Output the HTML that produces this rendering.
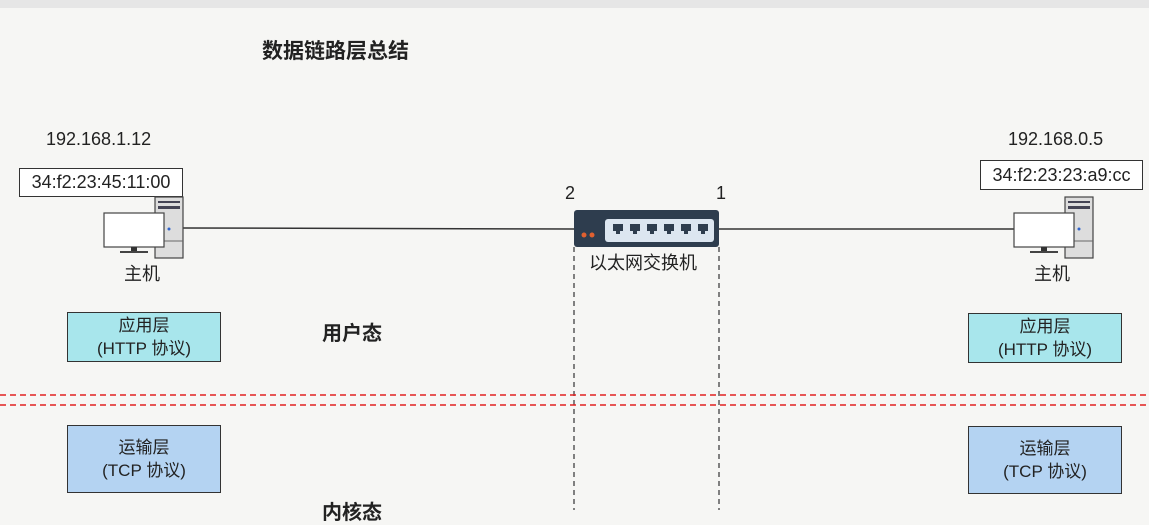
<!DOCTYPE html><html><head><meta charset="utf-8"><style>
body{margin:0;width:1149px;height:510px;overflow:hidden;background:#f6f6f4;font-family:"Liberation Sans","Noto Sans CJK SC",sans-serif;position:relative;color:#222}
.a{position:absolute}
.box{position:absolute;border:1px solid #333;text-align:center;font-size:17px;line-height:23px;box-sizing:border-box}
</style></head><body>
<div class="a" style="left:0;top:0;width:1149px;height:8px;background:#e6e6e6"></div>
<div class="a" style="left:262px;top:35px;font-size:21px;font-weight:bold">数据链路层总结</div>
<div class="a" style="left:46px;top:129px;font-size:18px">192.168.1.12</div>
<div class="a" style="left:1008px;top:129px;font-size:18px">192.168.0.5</div>
<div class="box" style="left:19px;top:168px;width:164px;height:29px;background:#fff;font-size:18px;line-height:27px">34:f2:23:45:11:00</div>
<div class="box" style="left:980px;top:160px;width:163px;height:30px;background:#fff;font-size:18px;line-height:28px">34:f2:23:23:a9:cc</div>
<svg class="a" style="left:0;top:0" width="1149" height="510">
<line x1="183" y1="228" x2="574" y2="229" stroke="#333" stroke-width="1.5"/>
<line x1="719" y1="229" x2="1014" y2="229" stroke="#333" stroke-width="1.5"/>
<g id="pc">
<rect x="155" y="197" width="28" height="61" fill="#ddd" stroke="#444" stroke-width="1.2"/>
<rect x="158" y="201" width="22" height="2" fill="#445"/><rect x="158" y="206" width="22" height="3" fill="#445"/>
<line x1="155" y1="241" x2="183" y2="241" stroke="#666"/>
<circle cx="169" cy="229" r="1.5" fill="#36c"/>
<rect x="104" y="213" width="60" height="34" fill="#fff" stroke="#444" stroke-width="1.2"/>
<rect x="131" y="247" width="6" height="5" fill="#333"/><rect x="120" y="251" width="28" height="2" fill="#444"/>
</g>
<use href="#pc" x="910" y="0"/>
<rect x="574" y="210" width="145" height="37" rx="3" fill="#2e3d4e"/>
<rect x="605" y="219" width="109" height="23" rx="3" fill="#dce6f0"/>
<g fill="#2e3d4e">
<path d="M613 224h10v7h-3v3h-4v-3h-3z"/><path d="M630 224h10v7h-3v3h-4v-3h-3z"/><path d="M647 224h10v7h-3v3h-4v-3h-3z"/><path d="M664 224h10v7h-3v3h-4v-3h-3z"/><path d="M681 224h10v7h-3v3h-4v-3h-3z"/><path d="M698 224h10v7h-3v3h-4v-3h-3z"/></g>
<circle cx="584" cy="235" r="2.5" fill="#e06030"/><circle cx="592" cy="235" r="2.5" fill="#e06030"/>
<g stroke="#333" stroke-dasharray="5,4" stroke-width="1.2"><line x1="574" y1="247" x2="574" y2="510"/><line x1="719" y1="247" x2="719" y2="510"/></g>
<g stroke="#e02020" stroke-dasharray="6,4" stroke-width="1.5"><line x1="0" y1="395" x2="1149" y2="395"/><line x1="0" y1="405" x2="1149" y2="405"/></g>
</svg>
<div class="a" style="left:565px;top:183px;font-size:18px">2</div>
<div class="a" style="left:716px;top:183px;font-size:18px">1</div>
<div class="a" style="left:589px;top:249px;font-size:18px">以太网交换机</div>
<div class="a" style="left:124px;top:260px;font-size:18px">主机</div>
<div class="a" style="left:1034px;top:260px;font-size:18px">主机</div>
<div class="a" style="left:322px;top:317px;font-size:20px;font-weight:bold">用户态</div>
<div class="a" style="left:322px;top:496px;font-size:20px;font-weight:bold">内核态</div>
<div class="box" style="left:67px;top:312px;width:154px;height:50px;background:#a8e6ec;padding-top:1px">应用层<br>(HTTP 协议)</div>
<div class="box" style="left:968px;top:313px;width:154px;height:50px;background:#a8e6ec;padding-top:1px">应用层<br>(HTTP 协议)</div>
<div class="box" style="left:67px;top:425px;width:154px;height:68px;background:#b4d3f2;padding-top:10px">运输层<br>(TCP 协议)</div>
<div class="box" style="left:968px;top:426px;width:154px;height:68px;background:#b4d3f2;padding-top:10px">运输层<br>(TCP 协议)</div>
</body></html>
